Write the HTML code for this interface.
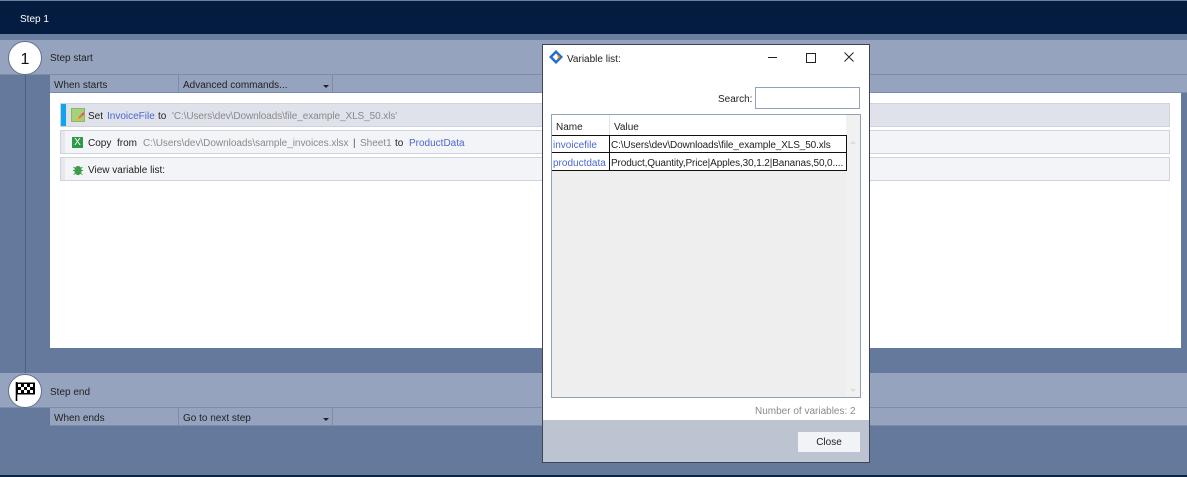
<!DOCTYPE html>
<html><head><meta charset="utf-8"><style>
html,body{margin:0;padding:0}
body{width:1187px;height:477px;overflow:hidden;position:relative;background:#65799d;font-family:"Liberation Sans",sans-serif;font-size:10px;color:#222;filter:blur(.3px)}
.b{position:absolute}
.t{position:absolute;white-space:nowrap;line-height:14px;height:14px}
.blue{color:#4a67d0}.gray{color:#8a8a8a}
.row{position:absolute;left:60px;width:1108px;height:22px;border:1px solid #cfd3dc;background:#f3f4f7}
.strip{position:absolute;left:61px;width:4px;height:22px;background:#e6e8ee}
</style></head><body>
<div class="b" style="left:0;top:0;width:1187px;height:1px;background:#6f7f9c"></div>
<div class="b" style="left:0;top:1px;width:1187px;height:33px;background:#041c3f"></div>
<div class="b" style="left:0;top:34px;width:1187px;height:6px;background:#6b7fa0"></div>
<div class="b" style="left:0;top:40px;width:1187px;height:34px;background:#95a3be"></div>
<div class="b" style="left:0;top:74px;width:1187px;height:1px;background:#7b8da9"></div>
<div class="b" style="left:50px;top:75px;width:1137px;height:17px;background:#95a3be"></div>
<div class="b" style="left:50px;top:92px;width:1137px;height:1px;background:#7b8da9"></div>
<div class="b" style="left:178px;top:75px;width:1px;height:17px;background:#7b8da9"></div>
<div class="b" style="left:332px;top:75px;width:1px;height:17px;background:#7b8da9"></div>
<div class="b" style="left:25px;top:70px;width:1px;height:304px;background:#4f6285"></div>
<div class="b" style="left:50px;top:93px;width:1131px;height:255px;background:#fff"></div>
<div class="b" style="left:0;top:373px;width:1187px;height:34px;background:#95a3be"></div>
<div class="b" style="left:0;top:407px;width:1187px;height:1px;background:#7b8da9"></div>
<div class="b" style="left:50px;top:408px;width:1137px;height:17px;background:#95a3be"></div>
<div class="b" style="left:50px;top:425px;width:1137px;height:1px;background:#7b8da9"></div>
<div class="b" style="left:178px;top:408px;width:1px;height:17px;background:#7b8da9"></div>
<div class="b" style="left:332px;top:408px;width:1px;height:17px;background:#7b8da9"></div>
<div class="b" style="left:0;top:475px;width:1187px;height:2px;background:#0c2444"></div>

<div class="t" style="left:20px;top:13px;color:#fff">Step 1</div>
<div class="b" style="left:8px;top:41px;width:32px;height:32px;border-radius:50%;background:#fff;border:1px solid #63738f;font-size:16px;line-height:36px;text-align:center;color:#111">1</div>
<div class="t" style="left:50px;top:52px">Step start</div>
<div class="t" style="left:54px;top:79px">When starts</div>
<div class="t" style="left:183px;top:79px">Advanced commands...</div>
<div class="b" style="left:323px;top:85px;border-left:3px solid transparent;border-right:3px solid transparent;border-top:3px solid #222"></div>

<div class="row" style="top:103px;background:#dfe2ea"></div>
<div class="b" style="left:61px;top:104px;width:5px;height:22px;background:#0ea5ee"></div>
<div class="b" style="left:71px;top:108px;width:12px;height:12px;background:#a7cf7c;border:1px solid #8cb862"></div>
<svg class="b" style="left:76px;top:112px" width="9" height="9" viewBox="0 0 9 9"><path d="M1 8L3 6" stroke="#f0b030" stroke-width="2"/><path d="M3 6L6 3" stroke="#e8782a" stroke-width="2"/><path d="M6 3L8 1" stroke="#e04a78" stroke-width="2"/></svg>
<div class="t" style="left:88px;top:110px">Set</div>
<div class="t blue" style="left:107px;top:110px">InvoiceFile</div>
<div class="t" style="left:158px;top:110px">to</div>
<div class="t gray" style="left:172px;top:110px;letter-spacing:-.08px">'C:\Users\dev\Downloads\file_example_XLS_50.xls'</div>

<div class="row" style="top:130px"></div>
<div class="strip" style="top:131px"></div>
<div class="b" style="left:72px;top:137px;width:11px;height:11px;background:#2f9a45;color:#fff;font-size:10px;line-height:11px;text-align:center">X</div>
<div class="t" style="left:88px;top:137px">Copy</div>
<div class="t" style="left:117px;top:137px">from</div>
<div class="t gray" style="left:143px;top:137px;letter-spacing:-.03px">C:\Users\dev\Downloads\sample_invoices.xlsx</div>
<div class="t" style="left:353px;top:137px;color:#555">|</div>
<div class="t gray" style="left:360px;top:137px">Sheet1</div>
<div class="t" style="left:395px;top:137px">to</div>
<div class="t blue" style="left:409px;top:137px">ProductData</div>

<div class="row" style="top:157px"></div>
<div class="strip" style="top:158px"></div>
<svg class="b" style="left:72px;top:164px" width="12" height="12" viewBox="0 0 12 12"><ellipse cx="6" cy="6.5" rx="3.6" ry="4.6" fill="#3f9c4c"/><path d="M1.5 3l2.5 2M10.5 3L8 5M1 6.5h2M11 6.5H9M1.5 10.5L4 9M10.5 10.5L8 9" stroke="#3f9c4c"/></svg>
<div class="t" style="left:88px;top:164px">View variable list:</div>

<div class="b" style="left:8px;top:374px;width:32px;height:32px;border-radius:50%;background:#fff;border:1px solid #63738f"></div>
<svg class="b" style="left:15px;top:382px" width="21" height="20" viewBox="0 0 21 20"><path d="M1.5 0V19" stroke="#000" stroke-width="1.6"/><rect x="1" y="0.5" width="19" height="12" fill="#000"/><path d="M3 2h3v3H3zM9 2h3v3H9zM15 2h3v3h-3zM6 5h3v3H6zM12 5h3v3h-3zM3 8h3v3H3zM9 8h3v3H9zM15 8h3v3h-3z" fill="#fff"/></svg>
<div class="t" style="left:50px;top:386px">Step end</div>
<div class="t" style="left:54px;top:412px">When ends</div>
<div class="t" style="left:183px;top:412px">Go to next step</div>
<div class="b" style="left:323px;top:418px;border-left:3px solid transparent;border-right:3px solid transparent;border-top:3px solid #222"></div>

<div class="b" style="left:542px;top:44px;width:326px;height:417px;background:#fff;border:1px solid #3c4656"></div>
<div class="b" style="left:543px;top:420px;width:326px;height:42px;background:#bdc4d1"></div>
<svg class="b" style="left:549px;top:50px" width="14" height="14" viewBox="0 0 14 14"><path d="M7 0L14 7 7 14 0 7z" fill="#1c6fd0"/><path d="M7 3.5L10.5 7 7 10.5 3.5 7z" fill="#fff"/><path d="M7.5 3.5L11.5 7 7.5 10.5 9 7z" fill="#f08a1c"/></svg>
<div class="t" style="left:567px;top:53px;color:#222">Variable list:</div>
<div class="b" style="left:768px;top:57px;width:9px;height:1px;background:#222"></div>
<div class="b" style="left:806px;top:53px;width:8px;height:8px;border:1px solid #222"></div>
<svg class="b" style="left:844px;top:52px" width="10" height="10" viewBox="0 0 10 10"><path d="M.5 .5L9.5 9.5M9.5 .5L.5 9.5" stroke="#222" fill="none"/></svg>

<div class="t" style="left:718px;top:93px">Search:</div>
<div class="b" style="left:755px;top:87px;width:103px;height:20px;border:1px solid #8fa3bf;background:#fff"></div>

<div class="b" style="left:551px;top:114px;width:308px;height:282px;border:1px solid #8fa3bf;background:#eeeeee"></div>
<div class="b" style="left:552px;top:115px;width:294px;height:20px;background:#fff"></div>
<div class="b" style="left:609px;top:115px;width:1px;height:20px;background:#e4e4e4"></div>
<div class="b" style="left:846px;top:115px;width:13px;height:281px;background:#f1f1f1"></div>
<div class="t" style="left:556px;top:121px">Name</div>
<div class="t" style="left:614px;top:121px">Value</div>
<div class="b" style="left:552px;top:135px;width:294px;height:16px;background:#fff;border-top:1px solid #111;border-bottom:1px solid #111"></div>
<div class="b" style="left:552px;top:153px;width:294px;height:17px;background:#fff;border-bottom:1px solid #111"></div>
<div class="b" style="left:609px;top:135px;width:1px;height:36px;background:#111"></div>
<div class="b" style="left:846px;top:135px;width:1px;height:36px;background:#111"></div>
<div class="t blue" style="left:553px;top:139px">invoicefile</div>
<div class="t blue" style="left:553px;top:157px">productdata</div>
<div class="t" style="left:611px;top:139px;letter-spacing:-.12px">C:\Users\dev\Downloads\file_example_XLS_50.xls</div>
<div class="t" style="left:611px;top:157px;letter-spacing:-.12px">Product,Quantity,Price|Apples,30,1.2|Bananas,50,0....</div>
<div class="b" style="left:850px;top:141px;border-left:3px solid transparent;border-right:3px solid transparent;border-bottom:3px solid #dcdcdc"></div>
<div class="b" style="left:850px;top:389px;border-left:3px solid transparent;border-right:3px solid transparent;border-top:3px solid #dcdcdc"></div>

<div class="t" style="left:755px;top:405px;color:#8a8a8a">Number of variables: 2</div>
<div class="b" style="left:798px;top:432px;width:62px;height:20px;background:#f2f3f6;text-align:center;line-height:21px;color:#222">Close</div>
</body></html>
